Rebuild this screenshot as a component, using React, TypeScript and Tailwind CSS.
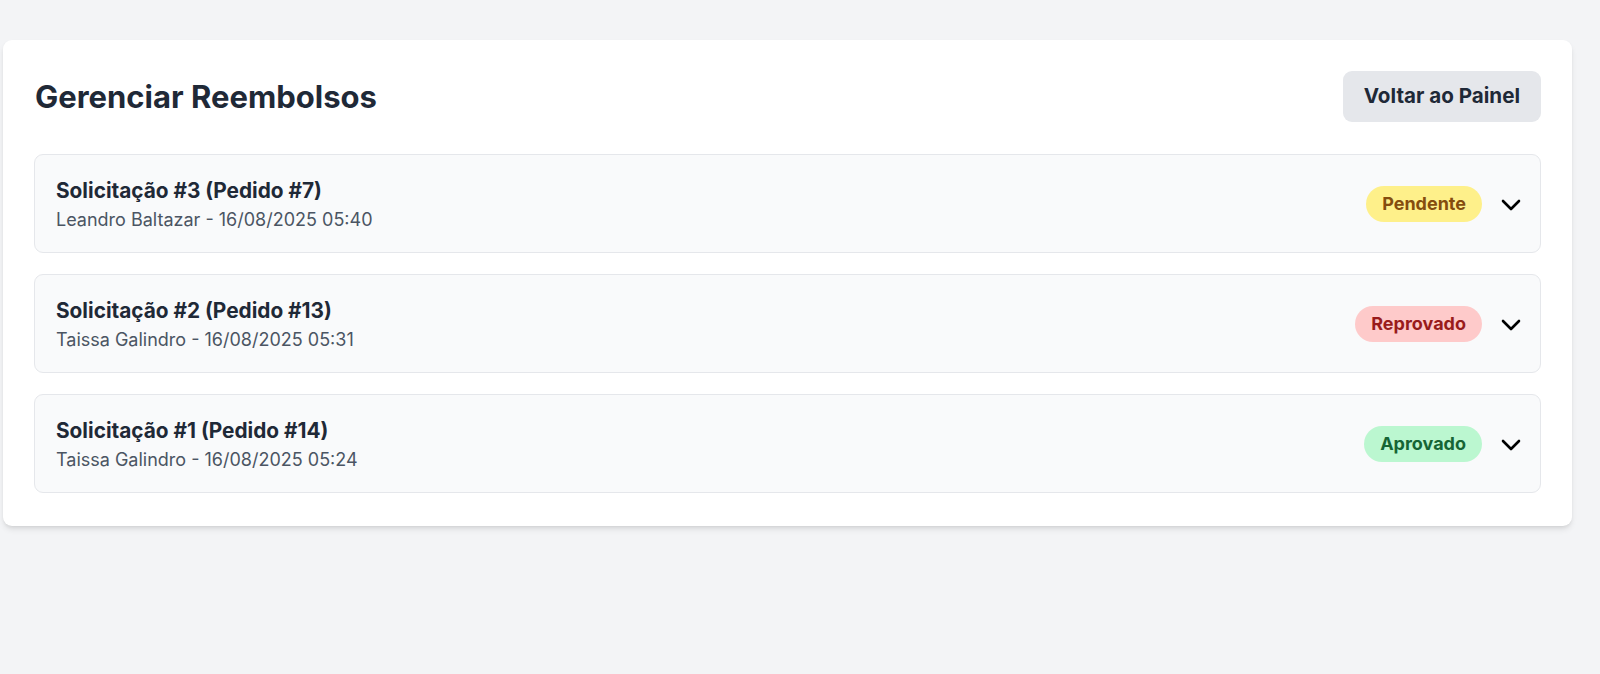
import React from 'react'

type Status = 'Pendente' | 'Reprovado' | 'Aprovado'

const requests: { id: number; order: number; customer: string; date: string; status: Status }[] = [
    { id: 3, order: 7, customer: 'Leandro Baltazar', date: '16/08/2025 05:40', status: 'Pendente' },
    { id: 2, order: 13, customer: 'Taissa Galindro', date: '16/08/2025 05:31', status: 'Reprovado' },
    { id: 1, order: 14, customer: 'Taissa Galindro', date: '16/08/2025 05:24', status: 'Aprovado' },
]

const badgeStyles: Record<Status, string> = {
    Pendente: 'bg-[#fef08a] text-[#854d0e]',
    Reprovado: 'bg-[#fecaca] text-[#991b1b]',
    Aprovado: 'bg-[#bbf7d0] text-[#166534]',
}

function ChevronDown() {
    return (
        <svg width="20" height="12" viewBox="0 0 20 12" fill="none" stroke="currentColor" strokeWidth="2.6" strokeLinecap="round" strokeLinejoin="round" className="text-black mt-[2px]">
            <path d="M2 2l8 8 8-8" />
        </svg>
    )
}

export default function App() {
    return (
        <div className="min-h-screen bg-[#f3f4f6] pt-[40px] pl-[3px] font-['Inter',sans-serif]">
            <div className="w-[1569px] bg-white rounded-[9px] shadow-md pt-[31px] px-[31px] pb-[33px]">
                <div className="flex justify-between items-center mb-[32px]">
                    <h1 className="text-[31px] leading-[40px] font-bold text-[#1f2937] pl-[1px]">Gerenciar Reembolsos</h1>
                    <button className="h-[51px] px-[21px] rounded-[9px] bg-[#e5e7eb] text-[20.6px] font-bold text-[#1f2937]">
                        Voltar ao Painel
                    </button>
                </div>
                <div className="flex flex-col gap-[21px]">
                    {requests.map((r) => (
                        <div
                            key={r.id}
                            className="h-[99px] border border-[#e5e7eb] bg-[#f9fafb] rounded-[9px] pl-[21px] pr-[19px] flex items-center justify-between"
                        >
                            <div className="pt-[2px]">
                                <div className="text-[20.8px] leading-[30px] font-bold text-[#1f2937]">
                                    Solicitação #{r.id} (Pedido #{r.order})
                                </div>
                                <div className="text-[18px] leading-[27px] text-[#4b5563]">
                                    {r.customer} - {r.date}
                                </div>
                            </div>
                            <div className="flex items-center gap-[19px]">
                                <span className={`h-[36px] px-[16px] rounded-full flex items-center text-[18px] font-bold ${badgeStyles[r.status]}`}>
                                    {r.status}
                                </span>
                                <ChevronDown />
                            </div>
                        </div>
                    ))}
                </div>
            </div>
        </div>
    )
}
